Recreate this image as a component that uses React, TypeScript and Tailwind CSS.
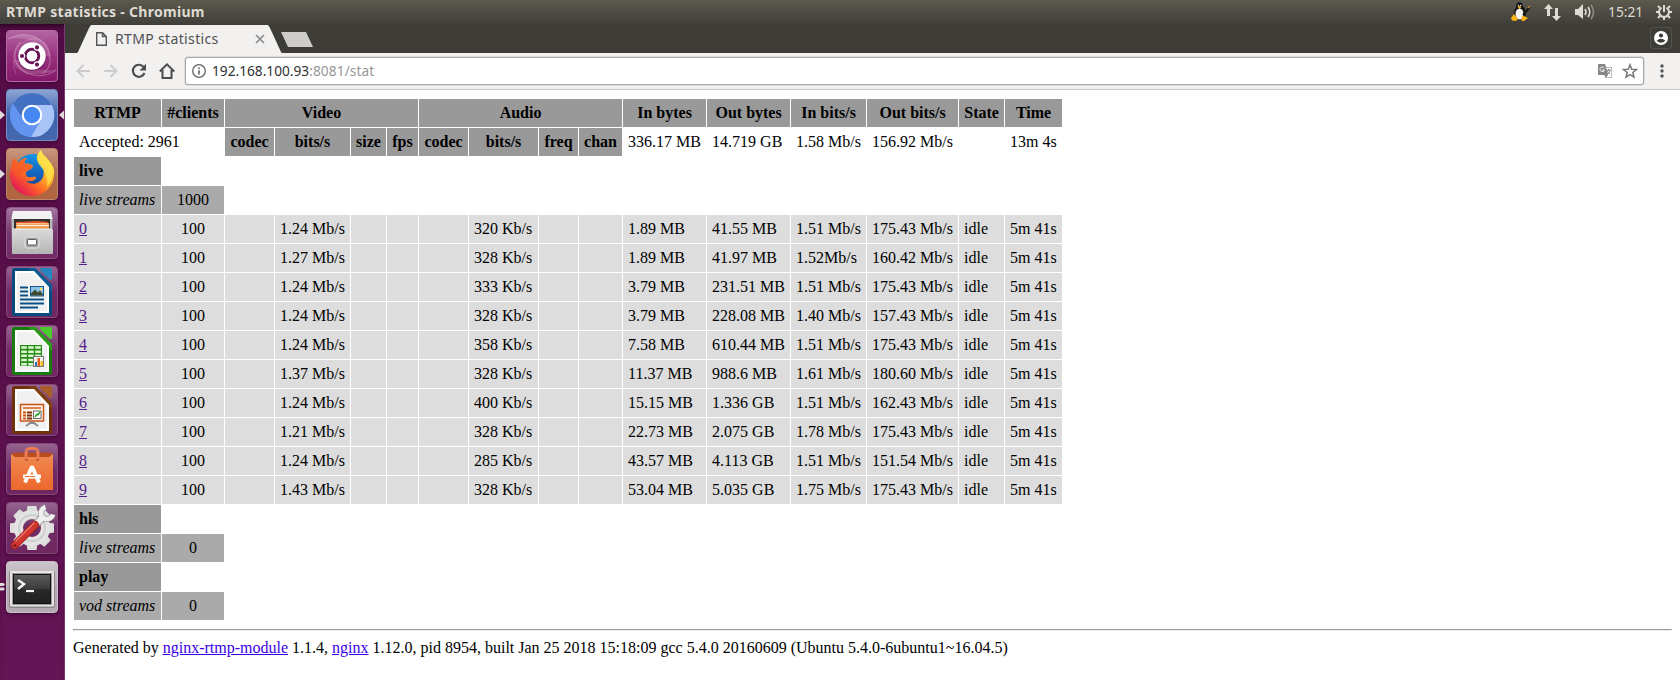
import React from 'react';

const COLS = [87, 62, 49, 75, 35, 31, 49, 69, 39, 43, 83, 83, 75, 91, 45, 57];

const STREAMS: string[][] = [
  ['1.24 Mb/s', '320 Kb/s', '1.89 MB', '41.55 MB', '1.51 Mb/s', '175.43 Mb/s'],
  ['1.27 Mb/s', '328 Kb/s', '1.89 MB', '41.97 MB', '1.52Mb/s', '160.42 Mb/s'],
  ['1.24 Mb/s', '333 Kb/s', '3.79 MB', '231.51 MB', '1.51 Mb/s', '175.43 Mb/s'],
  ['1.24 Mb/s', '328 Kb/s', '3.79 MB', '228.08 MB', '1.40 Mb/s', '157.43 Mb/s'],
  ['1.24 Mb/s', '358 Kb/s', '7.58 MB', '610.44 MB', '1.51 Mb/s', '175.43 Mb/s'],
  ['1.37 Mb/s', '328 Kb/s', '11.37 MB', '988.6 MB', '1.61 Mb/s', '180.60 Mb/s'],
  ['1.24 Mb/s', '400 Kb/s', '15.15 MB', '1.336 GB', '1.51 Mb/s', '162.43 Mb/s'],
  ['1.21 Mb/s', '328 Kb/s', '22.73 MB', '2.075 GB', '1.78 Mb/s', '175.43 Mb/s'],
  ['1.24 Mb/s', '285 Kb/s', '43.57 MB', '4.113 GB', '1.51 Mb/s', '151.54 Mb/s'],
  ['1.43 Mb/s', '328 Kb/s', '53.04 MB', '5.035 GB', '1.75 Mb/s', '175.43 Mb/s'],
];

function Head({ children, span }: { children: React.ReactNode; span?: number }) {
  return (
    <th colSpan={span} className="bg-[#999999] px-0 py-[5px] text-center font-bold">
      {children}
    </th>
  );
}

function Cell({ children }: { children?: React.ReactNode }) {
  return <td className="h-7 bg-[#dddddd] px-[5px] py-[5px]">{children}</td>;
}

function Section({ name, kind, count }: { name: string; kind: string; count: string }) {
  return (
    <>
      <tr>
        <td className="bg-[#999999] p-[5px] font-bold">{name}</td>
      </tr>
      <tr>
        <td className="bg-[#aaaaaa] p-[5px] italic">{kind}</td>
        <td className="bg-[#aaaaaa] p-[5px] text-center">{count}</td>
      </tr>
    </>
  );
}

function StatTable() {
  return (
    <table className="w-[990px] table-fixed border-separate border-spacing-[1px] whitespace-nowrap">
      <colgroup>
        {COLS.map((w, i) => (
          <col key={i} style={{ width: w }} />
        ))}
      </colgroup>
      <tbody>
        <tr>
          <Head>RTMP</Head>
          <Head>#clients</Head>
          <Head span={4}>Video</Head>
          <Head span={4}>Audio</Head>
          <Head>In bytes</Head>
          <Head>Out bytes</Head>
          <Head>In bits/s</Head>
          <Head>Out bits/s</Head>
          <Head>State</Head>
          <Head>Time</Head>
        </tr>
        <tr>
          <td colSpan={2} className="p-[5px]">Accepted: 2961</td>
          {['codec', 'bits/s', 'size', 'fps', 'codec', 'bits/s', 'freq', 'chan'].map((h, i) => (
            <Head key={i}>{h}</Head>
          ))}
          <td className="p-[5px]">336.17 MB</td>
          <td className="p-[5px]">14.719 GB</td>
          <td className="p-[5px]">1.58 Mb/s</td>
          <td className="p-[5px]">156.92 Mb/s</td>
          <td />
          <td className="p-[5px]">13m 4s</td>
        </tr>
        <Section name="live" kind="live streams" count="1000" />
        {STREAMS.map((s, i) => (
          <tr key={i}>
            <Cell><a className="text-[#551a8b] underline">{i}</a></Cell>
            <td className="bg-[#dddddd] p-[5px] text-center">100</td>
            <Cell />
            <Cell>{s[0]}</Cell>
            <Cell />
            <Cell />
            <Cell />
            <Cell>{s[1]}</Cell>
            <Cell />
            <Cell />
            <Cell>{s[2]}</Cell>
            <Cell>{s[3]}</Cell>
            <Cell>{s[4]}</Cell>
            <Cell>{s[5]}</Cell>
            <Cell>idle</Cell>
            <Cell>5m 41s</Cell>
          </tr>
        ))}
        <Section name="hls" kind="live streams" count="0" />
        <Section name="play" kind="vod streams" count="0" />
      </tbody>
    </table>
  );
}

function UbuntuIcon() {
  return (
    <svg viewBox="0 0 52 52" className="size-full">
      <g fill="none" stroke="#e9b9dc">
        <path d="M10 44C4 28 10 12 26 9c12-1 19 8 17 20" strokeOpacity=".2" strokeWidth="1.500" />
        <path d="M2 9c18-10 38-2 42 17 1 8-2 14-7 17" strokeOpacity=".35" strokeWidth="1.2" />
        <path d="M50 40c-14 10-34 6-40-8-3-9 0-16 5-20" strokeOpacity=".35" strokeWidth="1.2" />
      </g>
      <path d="M2 9C20-1 40 7 44 26L38 26C36 12 20 6 2 9Z" fill="#fff" fillOpacity=".16" />
      <path d="M8 30C8 42 26 50 50 40c-16 1-28-1-32-10Z" fill="#fff" fillOpacity=".16" />
      <circle cx="26" cy="27" r="14" fill="#4a0b3c" fillOpacity=".5" />
      <circle cx="26" cy="26" r="13.7" fill="#fff" />
      <circle cx="26" cy="26" r="6.8" fill="none" stroke="#6b1556" strokeWidth="3" />
      <g stroke="#fff" strokeWidth="1.2">
        <circle cx="16" cy="26" r="2.7" fill="#6b1556" />
        <circle cx="31" cy="17.4" r="2.7" fill="#6b1556" />
        <circle cx="31" cy="34.6" r="2.7" fill="#6b1556" />
      </g>
      <circle cx="26" cy="26" r="5.2" fill="#fff" />
    </svg>
  );
}

function ChromiumIcon() {
  return (
    <svg viewBox="0 0 52 52" className="size-full">
      <circle cx="26" cy="26" r="22" fill="#6496ec" />
      <path d="M7 15A22 22 0 0 1 45.5 16L26 16A10 10 0 0 0 17 30Z" fill="#4470c4" />
      <path d="M26 16h19.8A22 22 0 0 1 25 48l9.7-17A10 10 0 0 0 26 16Z" fill="#a8c3f7" />
      <path d="M7 15A22 22 0 0 0 25 48l9.7-17A10 10 0 0 1 17 30Z" fill="#6295ef" />
      <circle cx="26" cy="26" r="10.3" fill="#fff" />
      <circle cx="26" cy="26" r="8.2" fill="#4688f1" />
    </svg>
  );
}

function FirefoxIcon() {
  return (
    <svg viewBox="0 0 52 52" className="size-full">
      <defs>
        <linearGradient id="fxb" x1="0" y1="0" x2="0" y2="1">
          <stop offset="0" stopColor="#1594e8" />
          <stop offset="1" stopColor="#123a91" />
        </linearGradient>
        <linearGradient id="fxo" x1=".85" y1=".1" x2=".15" y2=".9">
          <stop offset="0" stopColor="#fff04e" />
          <stop offset=".35" stopColor="#ffb629" />
          <stop offset=".62" stopColor="#ff6a22" />
          <stop offset="1" stopColor="#e31558" />
        </linearGradient>
      </defs>
      <circle cx="27" cy="25" r="19" fill="url(#fxb)" />
      <path d="M7 10c2 1 4 3 5 5 2-3 5-5 9-5-2 2-3 4-2 6 3-1 6 0 8 2-1 3-4 4-6 5-2 2-1 5 1 6 3 1 5-1 8 0 0 4-6 5-10 4 5 5 14 3 17-4 2-6 0-12-4-14-4-4-2-10 2-13 1 5 6 7 9 12 3 4 5 8 4 13-1 12-10 21-22 21S4 39 4 27c0-7 3-10 3-17Z" fill="url(#fxo)" />
      <path d="M35 3c1 5 6 7 9 12 4 8 3 17-3 24 1-8-1-15-6-20-5-5-4-12 0-16Z" fill="#ffe04a" fillOpacity=".8" />
      <path d="M7 10c2 1 4 3 5 5 2-3 5-5 9-5-2 2-3 4-2 6 3-1 6 0 8 2-1 3-4 4-6 5-5 0-9 3-8 9-5-5-9-12-6-22Z" fill="#f4572a" fillOpacity=".75" />
    </svg>
  );
}

function FilesIcon() {
  return (
    <svg viewBox="0 0 52 52" className="size-full">
      <defs>
        <linearGradient id="fl" x1="0" y1="0" x2="0" y2="1">
          <stop offset="0" stopColor="#d9d9d9" />
          <stop offset="1" stopColor="#b5b5b5" />
        </linearGradient>
      </defs>
      <path d="M7 4h38l1.5 8-.5 32H6L5.500 12Z" fill="#b9b9b9" />
      <path d="M7 4h38l1.500 8h-41Z" fill="#f2f2f2" />
      <rect x="8" y="12" width="36" height="11" fill="#35302e" />
      <path d="M10 15l22-1 10 1v2H10Z" fill="#e0562a" />
      <path d="M10 16h33v7H10Z" fill="#f09a4d" />
      <path d="M11 16.500h30" stroke="#f7c08d" strokeWidth="1" />
      <path d="M11 18.500h32" stroke="#fff1df" strokeWidth="1.200" />
      <path d="M9 22h36l2 1v23q0 1-1 1H7q-1 0-1-1V23Z" fill="url(#fl)" />
      <path d="M6 22h40" stroke="#eee" strokeWidth="1" />
      <rect x="19" y="30" width="14" height="11" rx="2" fill="#a9a9a9" stroke="#e8e8e8" />
      <rect x="21.500" y="32.500" width="9" height="5.500" rx="1" fill="#fff" stroke="#555" />
    </svg>
  );
}

function DocFrame({ dark, mid, light, children }: { dark: string; mid: string; light: string; children: React.ReactNode }) {
  return (
    <svg viewBox="0 0 52 52" className="size-full">
      <path d="M8.500 2H29L46 19v28.500Q46 50 43.500 50h-35Q6 50 6 47.500v-43Q6 2 8.500 2Z" fill={dark} />
      <path d="M34 2h10q2 0 2 2v10q-2 0-3-1l-8-8q-1-1-1-3Z" fill={light} />
      <path d="M29 2 46 19v7L22 2Z" fill={mid} />
      <path d="M9 5h19l15 16v26H9Z" fill="#fff" />
      <path d="M11 7h16l14 15v23H11Z" fill="#f1f1f1" />
      {children}
    </svg>
  );
}

function WriterIcon() {
  return (
    <DocFrame dark="#064c7f" mid="#0a5c92" light="#2786bd">
      <path d="M14 21.500h8M14 25.500h8M14 29.500h8M14 33.500h24M14 37.500h24M14 41.500h18" stroke="#0a5086" strokeWidth="2" />
      <rect x="24.500" y="20.500" width="13" height="9.500" fill="#8fc4e8" stroke="#135a91" />
      <path d="M25 29.500v-2l4-4 3 3 2-2 3 4v1Z" fill="#3f4a31" />
      <circle cx="35" cy="23" r="1.200" fill="#ffe14a" />
    </DocFrame>
  );
}

function CalcIcon() {
  return (
    <DocFrame dark="#167c0b" mid="#2a9c15" light="#4ccc2c">
      <rect x="14" y="20" width="22" height="21" fill="#248c13" />
      <g fill="#dcf5d4">
        {[21.2, 25.4, 29.6, 33.8, 38].map((y) => (
          <path key={y} d={`M15.200 ${y}h5.600v2.500h-5.600ZM22.200 ${y}h5.600v2.500h-5.600ZM29.200 ${y}h5.600v2.500h-5.600Z`} />
        ))}
      </g>
      <rect x="27.500" y="31.500" width="10" height="10" fill="#f2f2f2" stroke="#777" />
      <path d="M29 41v-4h2v4Z" fill="#2677b8" />
      <path d="M31.500 41v-8h2.500v8Z" fill="#e85d17" />
      <path d="M34.500 41v-5H37v5Z" fill="#f5c023" />
    </DocFrame>
  );
}

function ImpressIcon() {
  return (
    <DocFrame dark="#703209" mid="#80400e" light="#a95d28">
      <rect x="14.500" y="20.500" width="23" height="16.500" fill="#fff0e4" stroke="#c85418" strokeWidth="1.500" />
      <path d="M17 24h18" stroke="#d9824f" strokeWidth="2" />
      <path d="M17 28.500h3M17 31.500h3M17 34.500h3" stroke="#c75416" strokeWidth="2" />
      <path d="M21 28.500h5M21 31.500h5M21 34.500h5" stroke="#7b310c" strokeWidth="2" />
      <rect x="27.500" y="27" width="7.500" height="7.500" fill="#fff" stroke="#6b6b6b" />
      <path d="m29 33 2-3 1 1 2-3" fill="none" stroke="#24a02b" strokeWidth="1.400" />
      <path d="m20 42 4-3h4l4 3M26 37v3" fill="none" stroke="#888" strokeWidth="1.800" />
    </DocFrame>
  );
}

function SoftwareIcon() {
  return (
    <svg viewBox="0 0 52 52" className="size-full">
      <defs>
        <linearGradient id="sw" x1="0" y1="0" x2="0" y2="1">
          <stop offset="0" stopColor="#f08650" />
          <stop offset="1" stopColor="#ed682b" />
        </linearGradient>
      </defs>
      <path d="M5 11 8 9.500h36l3 1.500v6H5Z" fill="#b94d20" />
      <path d="M5 14h42v33H5Z" fill="url(#sw)" />
      <path d="M5 11l4 3H5ZM47 11l-4 3h4Z" fill="#f28d5d" />
      <path d="M20 17V10q0-4.500 4-4.500h4q4 0 4 4.500v7" fill="none" stroke="#e57a53" strokeWidth="3" />
      <path d="M19 17h3M30 17h3" stroke="#bb5730" strokeWidth="1.500" />
      <path d="M19 39.500 26 23.500l7 16" fill="none" stroke="#fff" strokeWidth="3.800" strokeLinejoin="bevel" />
      <rect x="17" y="31.500" width="18" height="4" rx="1" fill="#fff" />
      <path d="M19 33.500h10" stroke="#ef6e33" strokeWidth="1" />
    </svg>
  );
}

function SettingsIcon() {
  return (
    <svg viewBox="0 0 52 52" className="size-full">
      <g fill="#dedede">
        {[0, 45, 90, 135].map((a) => (
          <path key={a} d="M21.500 4h9l1 6h-11ZM20.500 42h11l-1 6h-9Z" transform={`rotate(${a} 26 26)`} />
        ))}
      </g>
      <circle cx="26" cy="26" r="13.500" fill="none" stroke="#e3e3e3" strokeWidth="9" />
      <circle cx="26" cy="26" r="13" fill="none" stroke="#c9c9c9" strokeWidth="1.500" />
      <path d="m29 23 9-9" stroke="#9b9b9b" strokeWidth="7.500" />
      <path d="M39.500 5.200A6 6 0 1 0 46.800 12.500" fill="none" stroke="#9b9b9b" strokeWidth="6" />
      <path d="m29 23 9-9" stroke="#f0f0f0" strokeWidth="6" />
      <path d="M39.500 5.200A6 6 0 1 0 46.800 12.500" fill="none" stroke="#f0f0f0" strokeWidth="4.600" />
      <path d="M9 43 29 23" stroke="#9e1f1b" strokeWidth="8" strokeLinecap="round" />
      <path d="M9 43 29 23" stroke="#cf3630" strokeWidth="6.500" strokeLinecap="round" />
      <path d="M10 39 28 21" stroke="#e9736a" strokeWidth="1.500" strokeLinecap="round" />
      <circle cx="9" cy="43.500" r="1.500" fill="#831914" />
    </svg>
  );
}

function TerminalIcon() {
  return (
    <svg viewBox="0 0 52 52" className="size-full">
      <defs>
        <linearGradient id="tm" x1="0" y1="0" x2="0" y2="1">
          <stop offset="0" stopColor="#5b5b5b" />
          <stop offset=".5" stopColor="#3b3b3b" />
          <stop offset=".52" stopColor="#292929" />
          <stop offset="1" stopColor="#202020" />
        </linearGradient>
      </defs>
      <rect x="3" y="10" width="46" height="37" rx="1.500" fill="#8c888a" />
      <rect x="4" y="10" width="44" height="35.500" rx="1" fill="#e5e3e4" />
      <rect x="6.500" y="12.500" width="39" height="31" fill="#f7f7f7" stroke="#9a9a9a" />
      <rect x="7.500" y="13.500" width="37" height="29" fill="url(#tm)" stroke="#111" />
      <path d="m12 19 6 4-6 5" fill="none" stroke="#f2f2f2" strokeWidth="2.400" />
      <path d="M20 30h8" stroke="#f2f2f2" strokeWidth="2.200" />
    </svg>
  );
}

const LAUNCHERS: { icon: React.ReactNode; tile: string }[] = [
  { icon: <UbuntuIcon />, tile: 'from-[#b265a3] via-[#98307f] to-[#851969] border-[#b56aa7]' },
  { icon: <ChromiumIcon />, tile: 'from-[#8fa5d4] via-[#3d64ae] to-[#4567af] border-[#728ec5]' },
  { icon: <FirefoxIcon />, tile: 'from-[#c99880] via-[#ac6a4b] to-[#b0643e] border-[#bc8468]' },
  { icon: <FilesIcon />, tile: 'from-[#a277a0] via-[#74396e] to-[#712a65] border-[#8e5589]' },
  { icon: <WriterIcon />, tile: 'from-[#95658f] via-[#6f2b66] to-[#70275f] border-[#89477c]' },
  { icon: <CalcIcon />, tile: 'from-[#95658f] via-[#6f2b66] to-[#70275f] border-[#89477c]' },
  { icon: <ImpressIcon />, tile: 'from-[#95658f] via-[#6f2b66] to-[#70275f] border-[#89477c]' },
  { icon: <SoftwareIcon />, tile: 'from-[#95658f] via-[#6f2b66] to-[#70275f] border-[#89477c]' },
  { icon: <SettingsIcon />, tile: 'from-[#95658f] via-[#6f2b66] to-[#70275f] border-[#89477c]' },
  { icon: <TerminalIcon />, tile: 'from-[#ccc5cb] via-[#b5aab4] to-[#b6abb4] border-[#c9bfc8]' },
];

function Launcher() {
  return (
    <aside className="relative flex w-[65px] shrink-0 flex-col gap-[7px] border-r border-[#7d3b71] bg-linear-to-b from-[#560d48] via-[#5c114e] to-[#641455] pt-[6px] pl-[6px] shadow-[inset_0_5px_5px_-3px_#25051f]">
      {LAUNCHERS.map((l, i) => (
        <div key={i} className={`h-[52px] w-[52px] shrink-0 rounded-[4px] border bg-linear-to-b shadow-[0_1px_4px_#3c0832] ${l.tile}`}>
          <div className="-m-px size-[52px]">{l.icon}</div>
        </div>
      ))}
      <svg viewBox="0 0 64 656" className="absolute top-0 left-0 h-[656px] w-16" fill="#dfdadd">
        <path d="M0 86.500 5 91l-5 4.500ZM64 86.500 59 91l5 4.500ZM0 145.500l5 4.500-5 4.500Z" />
        <path d="M0 559h3.500l1.500 1.500-1.500 1.500H0ZM0 563.500h3.500L5 565l-1.500 1.500H0Z" />
      </svg>
    </aside>
  );
}

function TitleBar() {
  return (
    <header className="flex h-6 shrink-0 items-center justify-between bg-linear-to-b from-[#5c594e] to-[#403f3a] pr-2 pl-[6px] text-[#dfdbd2]">
      <span className="font-['Noto_Sans','Open_Sans',sans-serif] text-[14px] leading-6 font-bold tracking-[0.290px]">RTMP statistics - Chromium</span>
      <div className="flex items-center">
        <svg viewBox="0 0 20 20" className="size-5">
          <ellipse cx="9" cy="11" rx="6" ry="7.500" fill="#171717" />
          <ellipse cx="8.500" cy="4.500" rx="3.200" ry="4.200" fill="#111" />
          <ellipse cx="8.500" cy="12" rx="4" ry="5.500" fill="#f5f5f5" />
          <path d="m6.500 5 2-1 2 1-2 2Z" fill="#f1b12a" />
          <circle cx="7.500" cy="3.500" r=".7" fill="#fff" /><circle cx="9.700" cy="3.500" r=".7" fill="#fff" />
          <path d="m0 16 3-4 4 5-2 2-4-.5ZM11 14l2 0 4 2-4 3-3-.5Z" fill="#fbb31a" />
          <path d="m12 13 7-8" stroke="#171717" strokeWidth="2" /><path d="m17 6 2-2" stroke="#bd8b45" strokeWidth="1.500" />
        </svg>
        <svg viewBox="0 0 17 17" className="ml-[13px] size-[17px]" fill="#dfdbd2">
          <path d="M4.500 0 9 5H6v7H3V5H0ZM12.500 17 8 12h3V4h3v8h3Z" />
        </svg>
        <svg viewBox="0 0 20 18" className="ml-[14px] h-[18px] w-5" fill="none" stroke="#dfdbd2" strokeWidth="1.600">
          <path d="M0 6h3l5-5v15l-5-4H0Z" fill="#dfdbd2" stroke="none" />
          <path d="M10 6q2 3 0 6M13 4q3.500 5 0 10" /><path d="M16 2q5 7 0 14" stroke="#8d8a83" />
        </svg>
        <span className="ml-[13px] w-[36px] font-['Noto_Sans','Open_Sans',sans-serif] text-[13.800px] leading-6 whitespace-nowrap">15:21</span>
        <svg viewBox="0 0 16 16" className="ml-[12px] size-4" fill="none" stroke="#dfdbd2" strokeWidth="2">
          <path d="M5.500 3.700a5 5 0 1 0 5 0M8 1v7" />
          <path d="M3.800 3.800 2 2M12.200 3.800 14 2M3 8H0M13 8h3M4 12l-2 2M12 12l2 2M8 13v3" />
        </svg>
      </div>
    </header>
  );
}

function TabStrip() {
  return (
    <div className="flex h-[29px] shrink-0 items-start bg-[#3d3c37] font-['Noto_Sans','Open_Sans',sans-serif]">
      <div className="mt-px ml-3 flex h-7 w-[205px] items-center bg-[#f2f1f0] [clip-path:polygon(0_100%,1px_96%,12px_3px,14px_0,191px_0,193px_3px,204px_96%,100%_100%)]">
        <svg viewBox="0 0 11 14" className="ml-[19px] h-[14px] w-[11px]" fill="none" stroke="#555" strokeWidth="1.400">
          <path d="M.7.700H6.500L10.300 4.500v8.800H.7ZM6.500.700v3.800h3.800" />
        </svg>
        <span className="ml-[8px] w-[141px] text-[14px] leading-7 tracking-[0.350px] whitespace-nowrap text-[#505050]">RTMP statistics</span>
        <svg viewBox="0 0 8 8" className="size-2 shrink-0 overflow-visible" stroke="#8a8a8a" strokeWidth="1.700"><path d="m0 0 8 8M8 0 0 8" /></svg>
      </div>
      <div className="mt-2 -ml-px h-[15px] w-8 bg-[#cfcdca] [clip-path:polygon(0_0,25px_0,100%_100%,7px_100%)]" />
      <div className="mt-[3px] mr-2 ml-auto flex size-[22px] items-center justify-center rounded-[3px] border border-[#52514b]">
        <svg viewBox="0 0 14 14" className="size-[14px]">
          <circle cx="7" cy="7" r="7" fill="#fff" />
          <circle cx="7" cy="4.500" r="2.100" fill="#3d3c37" />
          <path d="M2.600 9.700Q7 5.700 11.400 9.700 7 14 2.600 9.700Z" fill="#3d3c37" />
        </svg>
      </div>
    </div>
  );
}

function Toolbar() {
  return (
    <div className="flex h-[37px] shrink-0 items-center border-b border-[#c8c7c6] bg-[#f2f1f0] pl-[11px]">
      <svg viewBox="0 0 14 14" className="size-[14px]" fill="none" stroke="#cdcccb" strokeWidth="1.900"><path d="M14 7H1.500M7.500 1l-6 6 6 6" /></svg>
      <svg viewBox="0 0 14 14" className="ml-[14px] size-[14px]" fill="none" stroke="#cdcccb" strokeWidth="1.900"><path d="M0 7h12.500M6.500 1l6 6-6 6" /></svg>
      <svg viewBox="0 0 16 16" className="ml-[13px] size-4" fill="none" stroke="#4d4d4d" strokeWidth="2.200"><path d="M12.600 4A6 6 0 1 0 13.500 10" /><path d="M15 .8v6.700H8.500Z" fill="#4d4d4d" stroke="none" /></svg>
      <svg viewBox="0 0 16 16" className="ml-3 size-4" fill="none" stroke="#4d4d4d" strokeWidth="2"><path d="M.8 8.500 8 1.400l7.200 7.100M3.500 7v8h9V7" /></svg>
      <div className="ml-[10px] flex h-7 w-[1459px] items-center rounded-[3px] border border-[#a9a8a7] bg-white pl-[6px] shadow-[0_0_0_.5px_#c6c5c4]">
        <svg viewBox="0 0 14 14" className="size-[14px]" fill="none" stroke="#626262" strokeWidth="1.300"><circle cx="7" cy="7" r="6.300" /><path d="M7 6.200v4.300M7 3.400v1.500" strokeWidth="1.600" /></svg>
        <span className="ml-[6px] font-['Noto_Sans','Open_Sans',sans-serif] text-[13.700px] leading-6 text-[#303030]">192.168.100.93<span className="tracking-[0.100px] text-[#969696]">:8081/stat</span></span>
        <svg viewBox="0 0 15 15" className="ml-auto size-[15px]">
          <path d="M1 0h6l1 3h6v11H7.500L6.500 11H1Q0 11 0 10V1Q0 0 1 0Z" fill="#858585" />
          <path d="M8 3.500h5.500v10H8l2-2.500Z" fill="#fff" />
          <path d="M6.300 4.100A2.300 2.300 0 1 0 6.500 6H4.300" fill="none" stroke="#fff" />
          <path d="M8 6.200h5M10.500 5v1.200M12 6.500q-1 3-3.500 4M9 7q1 2 3 3" fill="none" stroke="#858585" />
        </svg>
        <svg viewBox="0 0 16 16" className="mr-[5px] ml-[9px] size-4" fill="none" stroke="#787878" strokeWidth="1.500"><path d="m8 1.800 1.700 4.400 4.800.3-3.700 3 1.200 4.600L8 11.600l-4 2.500 1.200-4.600-3.700-3 4.800-.3Z" /></svg>
      </div>
      <svg viewBox="0 0 4 14" className="ml-[16px] h-[14px] w-1" fill="#555"><circle cx="2" cy="2" r="1.700" /><circle cx="2" cy="7" r="1.700" /><circle cx="2" cy="12" r="1.700" /></svg>
    </div>
  );
}

export default function App() {
  return (
    <div className="flex h-[680px] w-[1680px] flex-col overflow-hidden bg-white">
      <TitleBar />
      <div className="flex min-h-0 grow">
        <Launcher />
        <div className="flex min-w-0 grow flex-col">
          <TabStrip />
          <Toolbar />
          <main className="grow bg-white p-2 font-['Liberation_Serif',serif] text-base leading-[18px] text-black">
            <StatTable />
            <hr className="mt-2 h-[2px] border border-t-[#9a9a9a] border-r-[#eeeeee] border-b-[#eeeeee] border-l-[#9a9a9a]" />
            <p className="mt-2">
              Generated by <a className="text-[#3a00e8] underline">nginx-rtmp-module</a> 1.1.4,{' '}
              <a className="text-[#3a00e8] underline">nginx</a> 1.12.0, pid 8954, built Jan 25 2018 15:18:09 gcc 5.4.0 20160609 (Ubuntu 5.4.0-6ubuntu1~16.04.5)
            </p>
          </main>
        </div>
      </div>
    </div>
  );
}
